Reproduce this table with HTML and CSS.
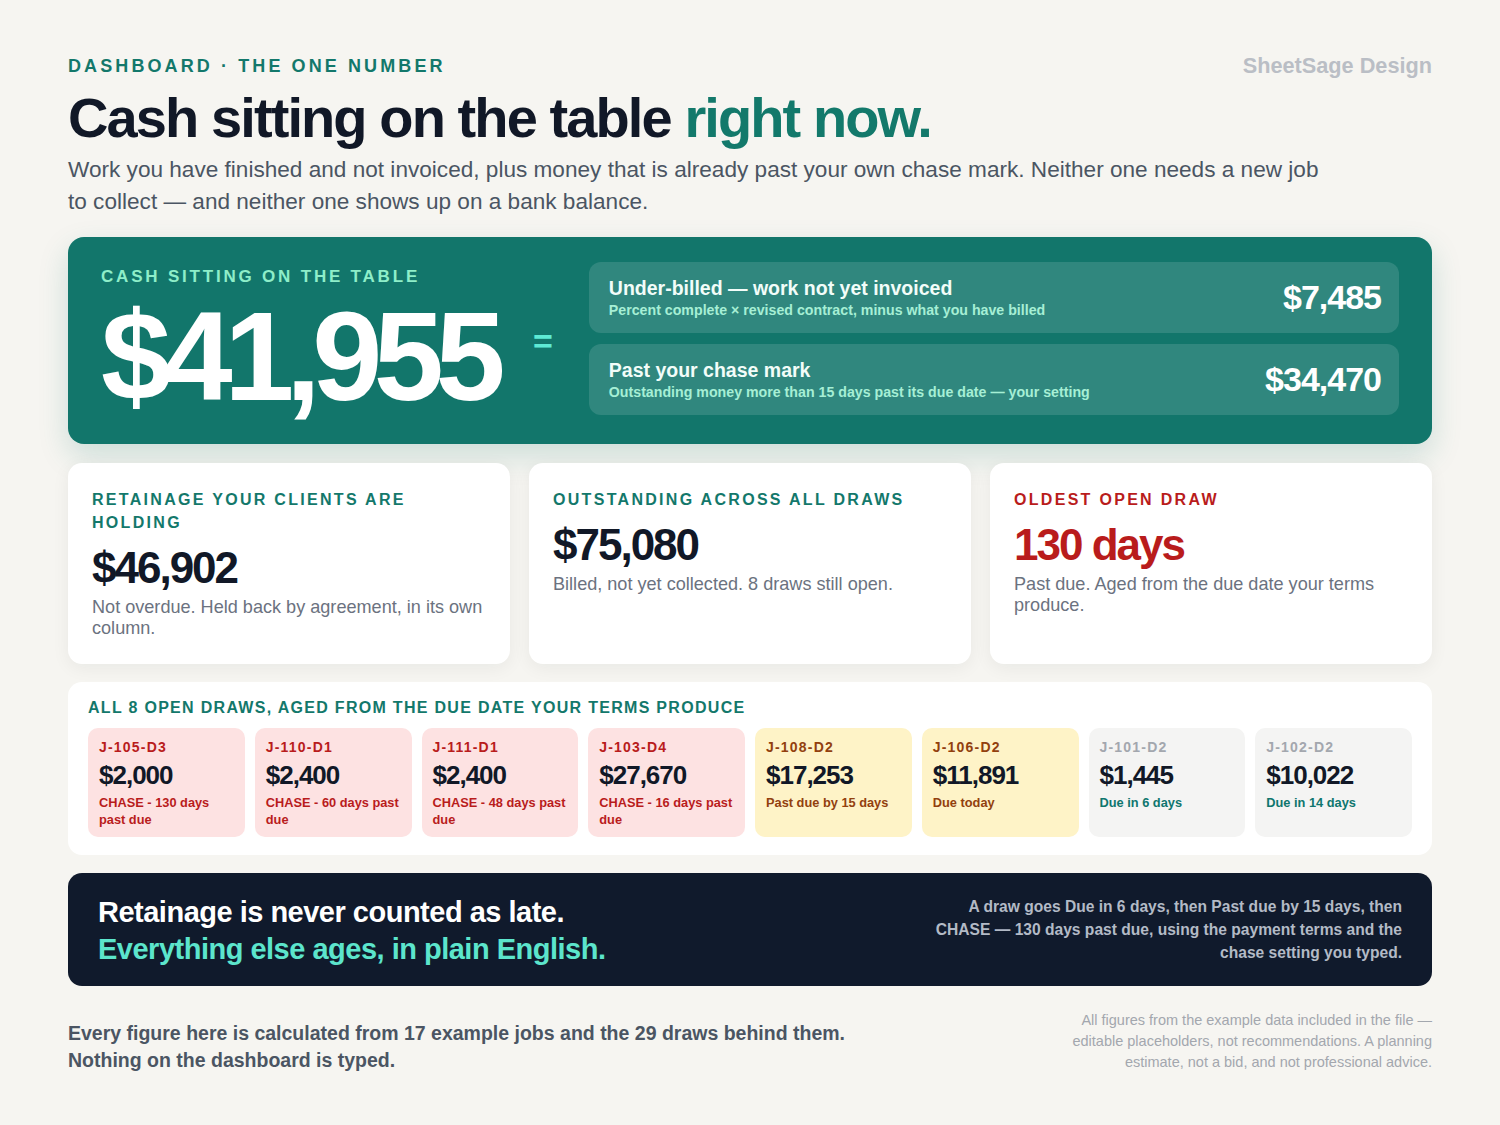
FILE: index.html
```html
<!DOCTYPE html>
<html lang="en">
<head>
<meta charset="utf-8">
<title>Dashboard · The one number</title>
<link rel="stylesheet" href="styles.css">
</head>
<body>
<main class="page">
  <header class="top">
    <div class="top-row">
      <div class="eyebrow">DASHBOARD · THE ONE NUMBER</div>
      <div class="brand">SheetSage Design</div>
    </div>
    <h1 class="title">Cash sitting on the table <span class="accent">right now.</span></h1>
    <p class="lede">Work you have finished and not invoiced, plus money that is already past your own chase mark. Neither one needs a new job to collect — and neither one shows up on a bank balance.</p>
  </header>

  <section class="hero">
    <div class="hero-main">
      <div class="hero-label">CASH SITTING ON THE TABLE</div>
      <div class="hero-number">$41,955</div>
    </div>
    <div class="hero-eq">=</div>
    <div class="hero-rows">
      <div class="hero-row">
        <div class="hero-row-text">
          <div class="hero-row-title">Under-billed — work not yet invoiced</div>
          <div class="hero-row-sub">Percent complete × revised contract, minus what you have billed</div>
        </div>
        <div class="hero-row-amt">$7,485</div>
      </div>
      <div class="hero-row">
        <div class="hero-row-text">
          <div class="hero-row-title">Past your chase mark</div>
          <div class="hero-row-sub">Outstanding money more than 15 days past its due date — your setting</div>
        </div>
        <div class="hero-row-amt">$34,470</div>
      </div>
    </div>
  </section>

  <section class="cards">
    <div class="card">
      <div class="card-label">RETAINAGE YOUR CLIENTS ARE HOLDING</div>
      <div class="card-value">$46,902</div>
      <div class="card-desc">Not overdue. Held back by agreement, in its own column.</div>
    </div>
    <div class="card">
      <div class="card-label">OUTSTANDING ACROSS ALL DRAWS</div>
      <div class="card-value">$75,080</div>
      <div class="card-desc">Billed, not yet collected. 8 draws still open.</div>
    </div>
    <div class="card">
      <div class="card-label red">OLDEST OPEN DRAW</div>
      <div class="card-value red">130 days</div>
      <div class="card-desc">Past due. Aged from the due date your terms produce.</div>
    </div>
  </section>

  <section class="draws">
    <div class="draws-title">ALL 8 OPEN DRAWS, AGED FROM THE DUE DATE YOUR TERMS PRODUCE</div>
    <div class="draw-grid">
      <div class="tile chase"><div class="tile-id">J-105-D3</div><div class="tile-amt">$2,000</div><div class="tile-status">CHASE - 130 days past due</div></div>
      <div class="tile chase"><div class="tile-id">J-110-D1</div><div class="tile-amt">$2,400</div><div class="tile-status">CHASE - 60 days past due</div></div>
      <div class="tile chase"><div class="tile-id">J-111-D1</div><div class="tile-amt">$2,400</div><div class="tile-status">CHASE - 48 days past due</div></div>
      <div class="tile chase"><div class="tile-id">J-103-D4</div><div class="tile-amt">$27,670</div><div class="tile-status">CHASE - 16 days past due</div></div>
      <div class="tile warn"><div class="tile-id">J-108-D2</div><div class="tile-amt">$17,253</div><div class="tile-status">Past due by 15 days</div></div>
      <div class="tile warn"><div class="tile-id">J-106-D2</div><div class="tile-amt">$11,891</div><div class="tile-status">Due today</div></div>
      <div class="tile ok"><div class="tile-id">J-101-D2</div><div class="tile-amt">$1,445</div><div class="tile-status">Due in 6 days</div></div>
      <div class="tile ok"><div class="tile-id">J-102-D2</div><div class="tile-amt">$10,022</div><div class="tile-status">Due in 14 days</div></div>
    </div>
  </section>

  <section class="banner">
    <div class="banner-head">
      <div class="banner-line">Retainage is never counted as late.</div>
      <div class="banner-line mint">Everything else ages, in plain English.</div>
    </div>
    <p class="banner-note">A draw goes Due in 6 days, then Past due by 15 days, then CHASE — 130 days past due, using the payment terms and the chase setting you typed.</p>
  </section>

  <footer class="foot">
    <p class="foot-main">Every figure here is calculated from 17 example jobs and the 29 draws behind them.<br>Nothing on the dashboard is typed.</p>
    <p class="foot-fine">All figures from the example data included in the file —<br>editable placeholders, not recommendations. A planning<br>estimate, not a bid, and not professional advice.</p>
  </footer>
</main>
</body>
</html>
```

FILE: styles.css
```css
* { box-sizing: border-box; }
html, body { margin: 0; padding: 0; }
body {
  background: #f6f5f1;
  font-family: "Liberation Sans", Arial, Helvetica, sans-serif;
  color: #111827;
}
.page {
  width: 1500px;
  padding: 56px 68px 40px;
}
.top-row {
  display: flex;
  justify-content: space-between;
  align-items: center;
  height: 20px;
}
.eyebrow {
  font-size: 18px;
  font-weight: 700;
  letter-spacing: 3.1px;
  color: #13786b;
  line-height: 20px;
}
.brand {
  font-size: 21.7px;
  font-weight: 700;
  color: #babec5;
  line-height: 20px;
}
.title {
  margin: 11px 0 0;
  font-size: 56px;
  line-height: 61.6px;
  font-weight: 700;
  letter-spacing: -1.9px;
  color: #111827;
}
.title .accent { color: #13796b; }
.lede {
  margin: 5px 0 0;
  max-width: 1266px;
  font-size: 22.6px;
  line-height: 32px;
  color: #4b5563;
}

/* hero */
.hero {
  margin-top: 19px;
  background: #12766b;
  border-radius: 16px;
  padding: 25px 33px 29px 33px;
  display: grid;
  grid-template-columns: auto auto 1fr;
  column-gap: 36px;
  align-items: center;
  box-shadow: 0 12px 30px rgba(18, 118, 107, 0.18);
}
.hero-main {
  align-self: start;
  margin-top: 5px;
}
.hero-label {
  font-size: 17px;
  font-weight: 700;
  letter-spacing: 2.8px;
  color: #8eeec9;
  line-height: 20px;
}
.hero-number {
  margin-top: 12px;
  font-size: 126px;
  line-height: 116px;
  font-weight: 700;
  letter-spacing: -8.5px;
  color: #ffffff;
}
.hero-eq {
  font-size: 34px;
  font-weight: 700;
  color: #5eead4;
  line-height: 1;
  margin-top: 6px;
}
.hero-rows {
  display: flex;
  flex-direction: column;
  gap: 11px;
}
.hero-row {
  height: 71px;
  border-radius: 12px;
  background: rgba(255, 255, 255, 0.13);
  display: flex;
  align-items: center;
  justify-content: space-between;
  padding: 0 18px 0 20px;
}
.hero-row-title {
  font-size: 19.5px;
  font-weight: 700;
  color: #f2fdf9;
  line-height: 24px;
}
.hero-row-sub {
  margin-top: 1px;
  font-size: 14.2px;
  font-weight: 700;
  color: #a6efd5;
  line-height: 18px;
}
.hero-row-amt {
  font-size: 34px;
  font-weight: 700;
  letter-spacing: -1px;
  color: #ffffff;
}

/* cards */
.cards {
  margin-top: 19px;
  display: grid;
  grid-template-columns: repeat(3, 1fr);
  gap: 19px;
}
.card {
  background: #ffffff;
  border-radius: 14px;
  padding: 25px 24px 24px;
  min-height: 201px;
  box-shadow: 0 4px 18px rgba(15, 40, 35, 0.06);
}
.card-label {
  font-size: 16px;
  font-weight: 700;
  letter-spacing: 2.3px;
  line-height: 23px;
  color: #13786b;
}
.card-value {
  margin-top: 10px;
  font-size: 44px;
  line-height: 48px;
  font-weight: 700;
  letter-spacing: -2px;
  color: #111827;
}
.red { color: #b91c1c; }
.card-desc {
  margin-top: 5px;
  font-size: 18.1px;
  line-height: 21.5px;
  color: #6b7280;
}

/* draws */
.draws {
  margin-top: 18px;
  background: #ffffff;
  border-radius: 14px;
  padding: 17px 20px 18px;
}
.draws-title {
  font-size: 16px;
  font-weight: 700;
  letter-spacing: 1.3px;
  line-height: 18px;
  color: #13786b;
}
.draw-grid {
  margin-top: 11px;
  display: grid;
  grid-template-columns: repeat(8, 1fr);
  gap: 10px;
}
.tile {
  border-radius: 10px;
  padding: 11px 9px 9px 11px;
  min-height: 109px;
}
.tile-id {
  font-size: 14px;
  font-weight: 700;
  letter-spacing: 1.2px;
  line-height: 16px;
}
.tile-amt {
  margin-top: 5px;
  font-size: 26px;
  line-height: 30px;
  font-weight: 700;
  letter-spacing: -1px;
  color: #111827;
}
.tile-status {
  margin-top: 4px;
  font-size: 12.8px;
  font-weight: 700;
  line-height: 17px;
}
.tile.chase { background: #fde2e2; }
.tile.chase .tile-id, .tile.chase .tile-status { color: #b91c1c; }
.tile.warn { background: #fef3c7; }
.tile.warn .tile-id, .tile.warn .tile-status { color: #92400e; }
.tile.ok { background: #f4f4f3; }
.tile.ok .tile-id { color: #a3a7ae; }
.tile.ok .tile-status { color: #0f766e; }

/* banner */
.banner {
  margin-top: 18px;
  background: #101a2c;
  border-radius: 14px;
  height: 113px;
  padding: 0 30px;
  display: flex;
  justify-content: space-between;
  align-items: center;
}
.banner-head {
  padding-top: 4px;
}
.banner-line {
  font-size: 29px;
  font-weight: 700;
  letter-spacing: -0.5px;
  line-height: 37px;
  color: #ffffff;
}
.banner-line.mint { color: #5ce5cc; }
.banner-note {
  margin: 0;
  max-width: 480px;
  text-align: right;
  font-size: 15.6px;
  font-weight: 700;
  line-height: 23px;
  color: #b3bac6;
}

/* footer */
.foot {
  margin-top: 23px;
  display: flex;
  justify-content: space-between;
  align-items: center;
}
.foot-main {
  margin: 11px 0 0;
  font-size: 19.5px;
  font-weight: 700;
  line-height: 27px;
  color: #4b5563;
}
.foot-fine {
  margin: 0;
  text-align: right;
  font-size: 14.5px;
  line-height: 21px;
  color: #a3a7ae;
}
```
